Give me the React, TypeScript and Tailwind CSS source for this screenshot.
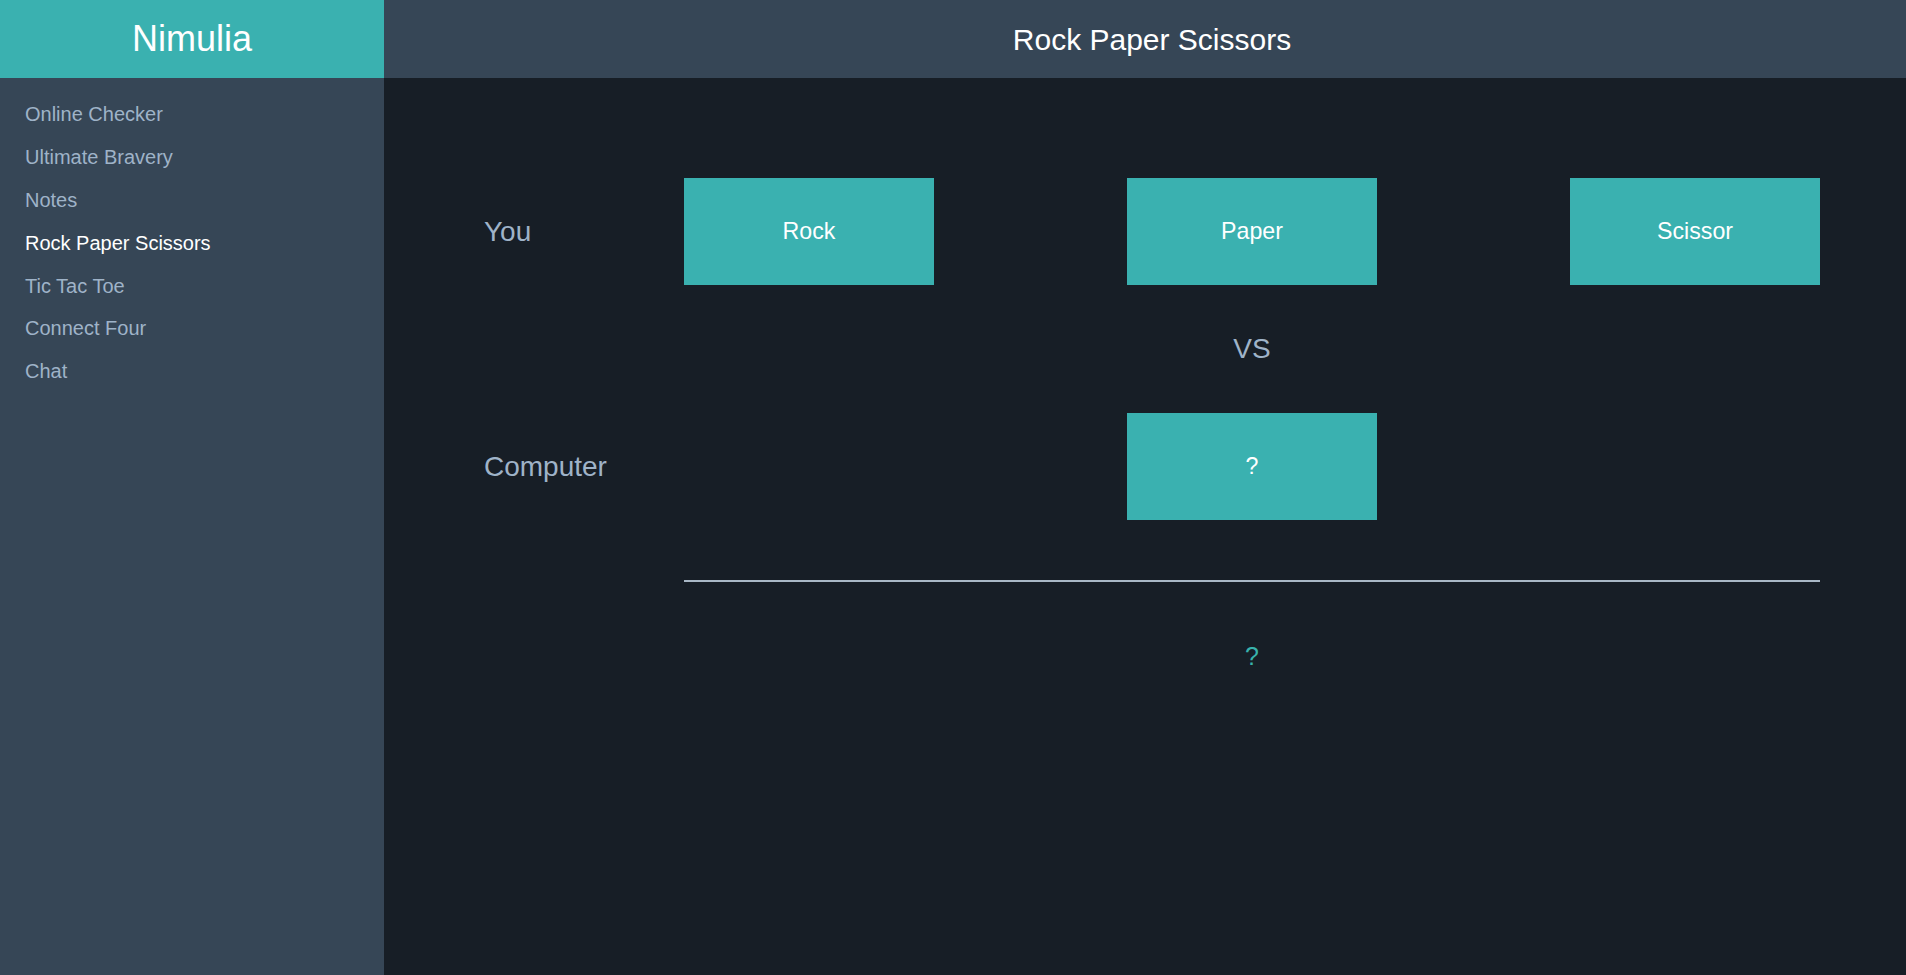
import React from "react";

const navItems = [
  "Online Checker",
  "Ultimate Bravery",
  "Notes",
  "Rock Paper Scissors",
  "Tic Tac Toe",
  "Connect Four",
  "Chat",
];

function Box({ label }: { label: string }) {
  return (
    <button className="w-[250px] h-[107px] bg-[#3ab1b0] text-white text-[23.2px] flex items-center justify-center cursor-pointer">
      {label}
    </button>
  );
}

export default function App() {
  return (
    <div
      className="flex w-full h-screen overflow-hidden bg-[#171e26]"
      style={{ fontFamily: '"Liberation Sans", Arial, sans-serif' }}
    >
      <aside className="w-[384px] shrink-0 flex flex-col bg-[#364656]">
        <div className="h-[78px] bg-[#3ab1b0] flex items-center justify-center text-white text-[36px]">
          Nimulia
        </div>
        <nav className="pt-[15px] flex flex-col">
          {navItems.map((item) => (
            <a
              key={item}
              className={`pl-[25px] h-[42.9px] leading-[42.9px] text-[20px] cursor-pointer ${
                item === "Rock Paper Scissors" ? "text-white" : "text-[#9fb3c8]"
              }`}
            >
              {item}
            </a>
          ))}
        </nav>
      </aside>

      <main className="flex-1 flex flex-col">
        <header className="h-[78px] bg-[#364656] flex items-center justify-center pl-[14px] text-white text-[30px]">
          Rock Paper Scissors
        </header>

        <section className="pt-[100px] pl-[100px] pr-[86px] flex flex-col">
          <div className="flex items-center h-[107px]">
            <div className="w-[200px] text-[28px] text-[#9fb3c8]">You</div>
            <div className="flex-1 flex justify-between">
              <Box label="Rock" />
              <Box label="Paper" />
              <Box label="Scissor" />
            </div>
          </div>

          <div className="flex h-[128px]">
            <div className="w-[200px]" />
            <div className="flex-1 flex items-center justify-center text-[28px] text-[#9fb3c8]">
              VS
            </div>
          </div>

          <div className="flex items-center h-[107px]">
            <div className="w-[200px] text-[28px] text-[#9fb3c8]">Computer</div>
            <div className="flex-1 flex justify-center">
              <div className="w-[250px] h-[107px] bg-[#3ab1b0] text-white text-[23.2px] flex items-center justify-center">
                ?
              </div>
            </div>
          </div>

          <div className="flex mt-[60px]">
            <div className="w-[200px]" />
            <div className="flex-1 h-[2px] bg-[#a9b8c6]" />
          </div>

          <div className="flex h-[148px]">
            <div className="w-[200px]" />
            <div className="flex-1 flex items-center justify-center text-[25px] leading-none text-[#38b2ac]">
              ?
            </div>
          </div>
        </section>
      </main>
    </div>
  );
}
